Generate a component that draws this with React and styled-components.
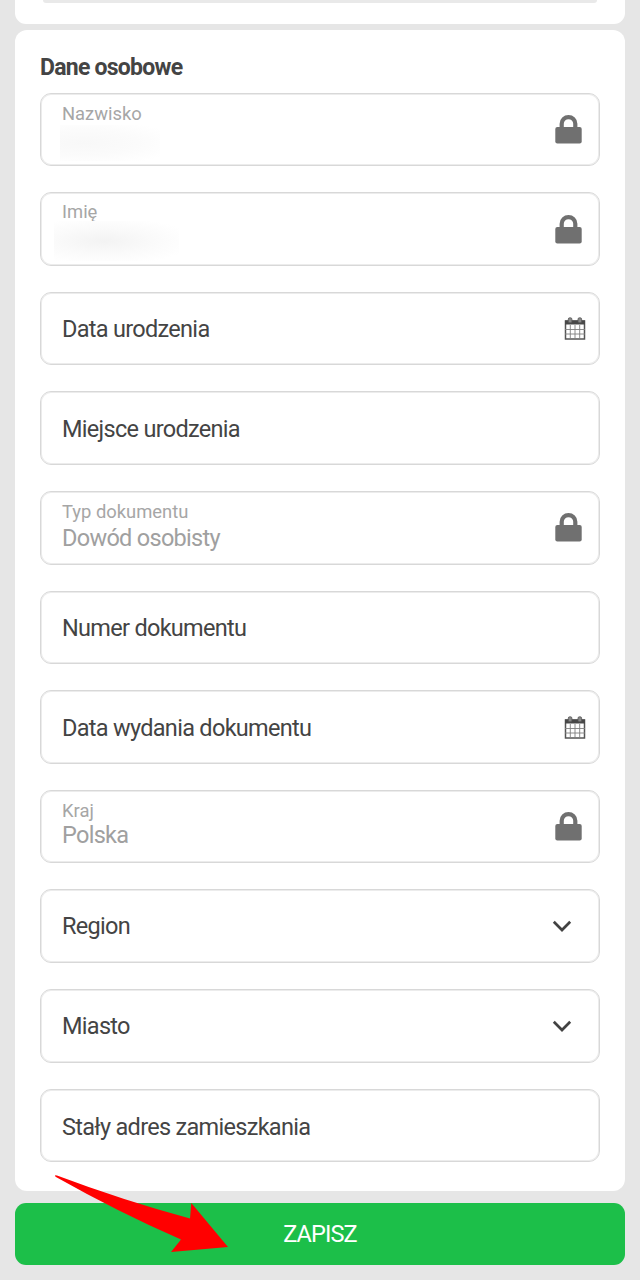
import React from 'react'
import styled, { createGlobalStyle } from 'styled-components'

const fields = [
  { label: 'Nazwisko', icon: 'lock', masked: 'short', shift: 1 },
  { label: 'Imię', icon: 'lock', masked: 'long' },
  { label: 'Data urodzenia', icon: 'calendar' },
  { label: 'Miejsce urodzenia', shift: 1 },
  { label: 'Typ dokumentu', value: 'Dowód osobisty', icon: 'lock', shift: 1 },
  { label: 'Numer dokumentu', shift: 1 },
  { label: 'Data wydania dokumentu', icon: 'calendar', shift: 1 },
  { label: 'Kraj', value: 'Polska', icon: 'lock', tight: true, shift: 1 },
  { label: 'Region', icon: 'chevron' },
  { label: 'Miasto', icon: 'chevron' },
  { label: 'Stały adres zamieszkania', shift: 2 },
]

const LockIcon = () => (
  <svg width="27" height="29" viewBox="0 0 27 29">
    <path d="M6.7 13V8.7a6.8 6.5 0 0 1 13.6 0V13" fill="none" stroke="#707070" strokeWidth="4.2"/>
    <rect x="0.3" y="12" width="26.4" height="16.6" rx="2" fill="#707070"/>
  </svg>
)

const CalendarIcon = () => (
  <svg width="22" height="23" viewBox="0 0 22 23">
    <path d="M1.5 4h19v18h-19z" fill="#fff" stroke="#555" strokeWidth="1.5"/>
    <path d="M1 3.5h20v4H1z" fill="#484848"/>
    <path d="M6.3 8v14M11 8v14M15.7 8v14M1 12.5h20M1 17h20" stroke="#808080" strokeWidth="0.9"/>
    <rect x="4.3" y="0.8" width="3.6" height="5" rx="1.4" fill="#888" stroke="#555" strokeWidth="0.8"/>
    <rect x="14" y="0.8" width="3.6" height="5" rx="1.4" fill="#888" stroke="#555" strokeWidth="0.8"/>
  </svg>
)

const ChevronIcon = () => (
  <svg width="20" height="14" viewBox="0 0 20 14">
    <path d="M1.8 2.8l8.2 8.2 8.2-8.2" fill="none" stroke="#424242" strokeWidth="2.7"/>
  </svg>
)

const icons = {
  lock: <LockIcon />,
  calendar: <CalendarIcon />,
  chevron: <ChevronIcon />,
}

export default class App extends React.Component{

  _getField(field, index){
    const locked = field.icon === 'lock';
    return(
      <Field key={index}>
        <FieldText $locked={locked} $shift={field.shift || 0}>
          {locked ? <SmallLabel>{field.label}</SmallLabel> : <Label>{field.label}</Label>}
          {field.value && <Value $tight={field.tight}>{field.value}</Value>}
          {field.masked && <Mask $size={field.masked}/>}
        </FieldText>
        {field.icon && <IconBox $type={field.icon}>{icons[field.icon]}</IconBox>}
      </Field>
    )
  }

  render(){
    return(
      <Page>
        <GlobalStyle />
        <PreviousCard>
          <PreviousField />
        </PreviousCard>
        <Card>
          <Title>Dane osobowe</Title>
          <FieldList>
            {fields.map((field, index) => this._getField(field, index))}
          </FieldList>
        </Card>
        <SaveButton>ZAPISZ</SaveButton>
        <Arrow width="180" height="80" viewBox="0 0 180 80">
          <path d="M5.5 4.7Q4 2.7 7 3.5Q72 28 140 46.5L141.3 31L178 75L121 80L131 67.5Q68 40 5.5 4.7z" fill="#f00"/>
        </Arrow>
      </Page>
    )
  }
}

const GlobalStyle = createGlobalStyle`
  body{
    margin:0;
    background:#e6e6e6;
    font-family:Roboto, "Liberation Sans", sans-serif;
  }
  *{
    box-sizing:border-box;
  }
`

const Page = styled.main`
  position:relative;
  width:640px;
  height:1280px;
  padding:0 15px;
  overflow:hidden;
  background:#e6e6e6;
`

const PreviousCard = styled.section`
  height:24px;
  padding:0 25px;
  background:#fff;
  border-radius:0 0 11px 11px;
`

const PreviousField = styled.div`
  height:3px;
  margin:0 3px;
  background:#e9e9e9;
  border-radius:0 0 6px 6px;
`

const Card = styled.section`
  height:1160.5px;
  margin-top:6px;
  padding:22px 25px 0;
  background:#fff;
  border-radius:12px;
`

const Title = styled.h2`
  height:40.7px;
  margin:0;
  color:#444;
  font-size:23px;
  font-weight:700;
  line-height:31px;
  letter-spacing:-0.75px;
`

const FieldList = styled.div`
  display:flex;
  flex-direction:column;
  gap:26px;
`

const Field = styled.div`
  display:flex;
  align-items:center;
  justify-content:space-between;
  height:73.6px;
  padding-left:21px;
  border:1px solid #d8d8d8;
  border-radius:11px;
  box-shadow:inset 0 0 0 1px #ececec;
`

const FieldText = styled.div`
  display:flex;
  flex-direction:column;
  justify-content:${props => props.$locked ? 'flex-start' : 'center'};
  height:100%;
  padding-top:${props => props.$locked ? 8 + props.$shift : props.$shift * 2}px;
`

const Label = styled.span`
  color:#444;
  font-size:23.5px;
  line-height:30px;
  letter-spacing:-0.7px;
`

const SmallLabel = styled.span`
  color:#a6a6a6;
  font-size:18.4px;
  line-height:22px;
`

const Value = styled.span`
  margin-top:${props => props.$tight ? '-1px' : '1px'};
  color:#a0a0a0;
  font-size:23.5px;
  line-height:28px;
  letter-spacing:-0.7px;
`

// soft grey smudge that hides the private value
const Mask = styled.div`
  width:${props => props.$size === 'long' ? '125px' : '100px'};
  height:${props => props.$size === 'long' ? '40px' : '36px'};
  margin-top:${props => props.$size === 'long' ? '-2px' : '0'};
  margin-left:${props => props.$size === 'long' ? '-8px' : '-2px'};
  background:${props => props.$size === 'long'
    ? 'radial-gradient(ellipse at 40% 50%, #f3f3f3, #fafafa 45%, #fff 85%)'
    : 'radial-gradient(ellipse at 25% 50%, #f8f8f8, #fbfbfb 50%, #fff 90%)'};
`

const IconBox = styled.div`
  display:flex;
  margin-right:${props => props.$type === 'lock' ? '17px' : props.$type === 'calendar' ? '13px' : '27px'};
`

const SaveButton = styled.button`
  display:block;
  width:100%;
  height:62px;
  margin-top:12.5px;
  padding:0;
  border:0;
  border-radius:11px;
  background:#1cbf49;
  color:#fff;
  font-family:inherit;
  font-size:23.5px;
  font-weight:400;
  line-height:62px;
  letter-spacing:-0.9px;
`

const Arrow = styled.svg`
  position:absolute;
  left:50px;
  top:1172px;
  overflow:visible;
`
